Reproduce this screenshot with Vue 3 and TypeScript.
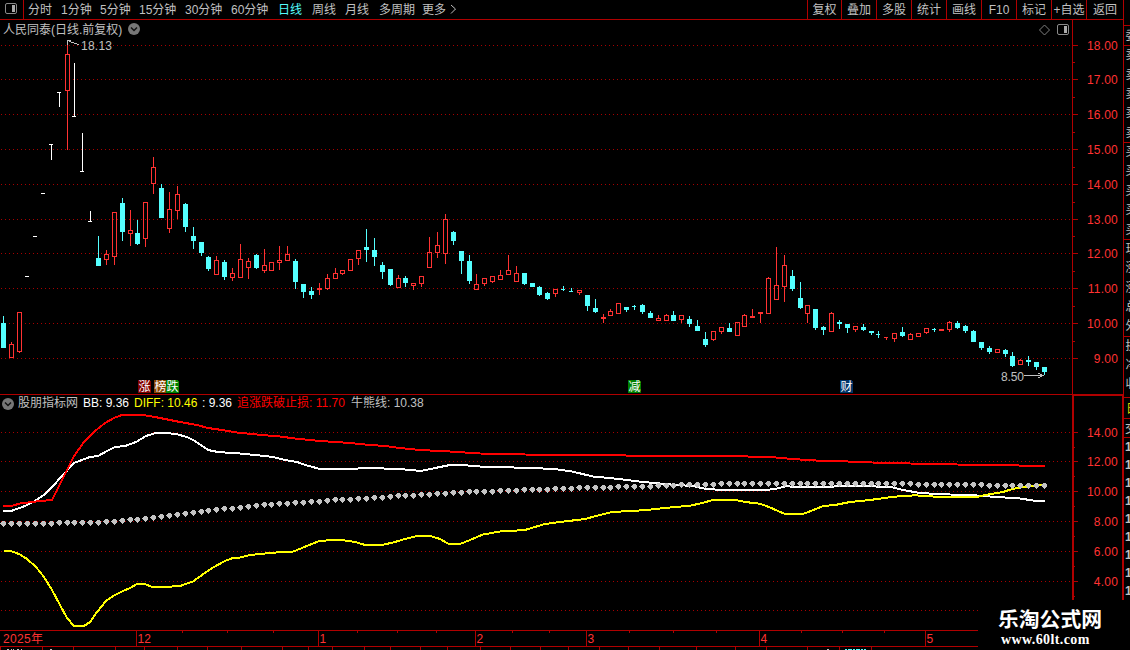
<script setup lang="ts">
type Kind = 'r' | 'c'
// x centre, high, body top, body bottom, low
type Bar = [Kind, number, number, number, number, number]

const bars: Bar[] = [
  ['c', 3, 316, 323, 348, 348], ['r', 11, 342, 344, 358, 358], ['r', 19, 312, 312, 352, 353],
  ['r', 67, 40, 54, 91, 150],
  ['c', 98, 236, 258, 266, 266], ['r', 106, 250, 254, 260, 265], ['r', 114, 212, 212, 257, 265],
  ['c', 122, 198, 203, 232, 241], ['r', 130, 210, 230, 234, 246], ['c', 137, 220, 233, 244, 245],
  ['r', 145, 202, 202, 239, 247], ['r', 153, 157, 167, 184, 194], ['c', 161, 184, 188, 218, 218],
  ['r', 169, 192, 209, 229, 233], ['r', 177, 186, 194, 211, 219], ['c', 185, 203, 204, 227, 232],
  ['c', 193, 227, 236, 241, 249], ['c', 201, 242, 242, 253, 256], ['c', 208, 256, 257, 269, 271],
  ['r', 216, 256, 260, 275, 275], ['c', 224, 260, 262, 277, 280], ['r', 232, 268, 273, 278, 281],
  ['r', 240, 244, 259, 278, 278], ['r', 248, 258, 261, 268, 279], ['c', 256, 254, 255, 268, 269],
  ['r', 264, 249, 265, 271, 273], ['r', 271, 262, 262, 271, 271], ['r', 279, 246, 260, 263, 270],
  ['r', 287, 246, 254, 261, 261], ['c', 295, 259, 261, 282, 289], ['c', 303, 284, 284, 292, 298],
  ['c', 311, 287, 291, 295, 299], ['r', 319, 283, 288, 290, 295], ['r', 327, 274, 278, 289, 290],
  ['r', 335, 268, 273, 279, 279], ['r', 342, 270, 270, 274, 275], ['r', 350, 259, 259, 271, 271],
  ['r', 358, 250, 250, 259, 265], ['c', 366, 229, 247, 250, 262], ['c', 374, 238, 250, 257, 266],
  ['c', 382, 262, 265, 272, 279], ['c', 390, 269, 269, 285, 286], ['r', 398, 275, 278, 288, 288],
  ['c', 405, 276, 278, 283, 287], ['r', 413, 283, 283, 286, 290], ['r', 421, 276, 276, 284, 287],
  ['r', 429, 237, 252, 268, 268], ['r', 437, 232, 245, 253, 258], ['r', 445, 214, 219, 254, 264],
  ['c', 453, 231, 232, 241, 245], ['c', 461, 251, 251, 261, 274], ['c', 469, 255, 261, 281, 284],
  ['r', 476, 274, 284, 290, 290], ['r', 484, 278, 278, 284, 286], ['r', 492, 276, 276, 282, 283],
  ['r', 500, 270, 275, 280, 280], ['r', 508, 255, 270, 275, 275], ['r', 516, 266, 273, 282, 282],
  ['c', 524, 273, 273, 284, 285], ['c', 532, 283, 283, 287, 287], ['c', 539, 286, 287, 295, 296],
  ['c', 547, 292, 293, 299, 300], ['r', 555, 289, 289, 294, 297], ['c', 563, 286, 289, 290, 291],
  ['c', 571, 288, 291, 292, 292], ['r', 579, 290, 290, 293, 295], ['c', 587, 295, 295, 306, 311],
  ['c', 595, 299, 308, 312, 313], ['r', 603, 314, 317, 319, 323], ['r', 610, 309, 311, 316, 316],
  ['r', 618, 303, 303, 314, 314], ['c', 626, 307, 307, 310, 312], ['c', 634, 305, 306, 307, 310],
  ['c', 642, 304, 305, 312, 314], ['c', 650, 311, 313, 318, 318], ['r', 658, 315, 318, 321, 321],
  ['r', 666, 314, 315, 321, 321], ['c', 673, 311, 315, 321, 321], ['r', 681, 315, 315, 320, 323],
  ['c', 689, 316, 319, 324, 327], ['c', 697, 320, 326, 331, 331], ['c', 705, 332, 339, 345, 347],
  ['r', 713, 331, 331, 340, 341], ['r', 721, 327, 327, 332, 334], ['c', 729, 323, 328, 332, 332],
  ['r', 737, 322, 322, 336, 336], ['r', 744, 314, 315, 327, 327], ['r', 752, 309, 316, 318, 318],
  ['r', 760, 312, 312, 314, 323], ['r', 768, 277, 278, 314, 314], ['r', 776, 247, 285, 300, 300],
  ['r', 784, 255, 265, 287, 302], ['c', 792, 270, 276, 289, 291], ['c', 800, 282, 298, 308, 309],
  ['r', 807, 305, 305, 314, 323], ['c', 815, 309, 309, 328, 330], ['c', 823, 326, 327, 330, 335],
  ['r', 831, 312, 313, 332, 332], ['c', 839, 320, 322, 324, 329], ['c', 847, 324, 324, 328, 333],
  ['r', 855, 326, 326, 330, 332], ['c', 863, 324, 327, 330, 331], ['c', 871, 331, 331, 333, 335],
  ['c', 878, 331, 334, 335, 338], ['r', 886, 337, 337, 338, 340], ['r', 894, 333, 333, 339, 342],
  ['c', 902, 327, 332, 336, 337], ['r', 910, 333, 334, 340, 340], ['r', 918, 333, 333, 337, 337],
  ['r', 926, 328, 328, 333, 334], ['c', 934, 328, 329, 330, 332], ['r', 941, 329, 329, 331, 331],
  ['r', 949, 321, 322, 330, 332], ['c', 957, 321, 323, 328, 329], ['c', 965, 325, 326, 331, 333],
  ['c', 973, 330, 331, 342, 342], ['c', 981, 342, 342, 348, 350], ['c', 989, 346, 348, 352, 354],
  ['r', 997, 349, 349, 353, 353], ['c', 1005, 349, 350, 354, 357], ['c', 1012, 352, 356, 366, 367],
  ['r', 1020, 359, 360, 365, 365], ['c', 1028, 356, 360, 362, 366], ['c', 1036, 362, 362, 367, 370],
  ['c', 1044, 367, 367, 372, 375],
]

// Limit-price sessions: bar x, bar y, stem top, stem bottom
const limits: number[][] = [
  [27, 276, 276, 277], [35, 236, 236, 237], [43, 193, 193, 194],
  [51, 144, 144, 160], [59, 92, 92, 107], [74, 116, 63, 117], [82, 171, 133, 172], [90, 221, 211, 222],
]

function rect(x0: number, y0: number, x1: number, y1: number): string {
  return `M${x0} ${y0}H${x1}V${y1}H${x0}Z`
}

let redPath = ''
let cyanPath = ''
for (const [k, x, h, t, b, l] of bars) {
  const thin = b - t === 1
  let d = ''
  if (t > h) d += rect(x, h, x + 1, t)
  if (l > b) d += rect(x, b, x + 1, l)
  d += rect(x - 2, t, thin ? x + 2 : x + 3, b)
  if (k === 'r') {
    if (b - t > 2) d += rect(x - 1, t + 1, x + 2, b - 1)
    redPath += d
  } else cyanPath += d
}
const limitPath = limits
  .map(([x, y, t, b]) => rect(x - 2, y, x + 2, y + 1) + (b - t > 1 ? rect(x, t, x + 1, b) : ''))
  .join('')

interface Level { y: number; label: string }
const priceLevels: Level[] = [45, 79, 114, 149, 184, 219, 253, 288, 323, 358].map((y, i) => ({
  y, label: (18 - i).toFixed(2),
}))
const priceMinor = [62, 97, 132, 167, 202, 236, 271, 306, 341]
const indLevels: Level[] = [432, 461, 491, 521, 551, 581].map((y, i) => ({ y, label: (14 - 2 * i).toFixed(2) }))
const indGrid = [432, 461, 491, 521, 551, 581, 610]
const indMinor = [447, 476, 506, 536, 566, 596]

const stopLine = '3,506 11,506 20,503.5 40,501 52,500 58,488 74,456 84,442 95,431 105,423 114,418 122,415 134,414.6 145,415.3 155,417 165,419 180,422 197,425 208,428 222,430 237,432.5 262,435 280,436.5 295,438.5 320,441 350,443 370,445 385,446 400,448 415,449.5 430,450.5 450,451.5 480,453.5 525,454.5 560,455 626,455.5 630,456 744,456 752,457 776,457.5 792,459 808,460 823,461 848,461.5 872,462.5 910,463.5 957,464.5 1012,465.3 1045,466.2'
const bbLine = '3,511 11,511 25,506 35,501 45,494 52,487 62,476 74,463 82,460 90,457 98,456 107,451 115,447 125,446 136,442 146,436 155,433.3 167,433 178,434.5 187,437 195,441 208,450 218,452 240,453.5 260,455.5 273,457 285,460 297,462 307,465.5 320,469 350,469 367,468 400,469 421,471 435,468 450,465 462,465 480,466.5 530,468 555,469 572,471.5 593,476.5 610,478 627,480 643,482 673,484.7 693,486 706,489 723,490 767,490 777,488.5 787,486 793,487 830,487 838,486 873,486.3 893,487.5 903,490 920,493 937,494 977,495.5 997,497 1020,498.5 1033,500.5 1045,501.3'
const diffLine = '4,551 11,551 20,554.5 27,559 36,567 44,577 52,590 60,605 67,618 74,626 84,626 90,622 97,612 106,601 113,596 122,591.5 130,588 136,584.5 145,584 152,587 165,587 180,586 193,581.5 202,575 213,567.5 225,561 233,558 240,557.5 250,555 270,553 280,552.2 292,552 302,548 318,541.5 330,540 345,540.5 355,542 365,545 382,545 395,542 405,539 415,536.5 430,536 440,539 448,543.5 460,544 470,540 483,534.5 500,531.5 525,530 545,524 560,522 585,519 600,515 612,512 643,510.3 665,508 690,505.7 700,503.5 712,500.3 737,500.3 745,502 760,503.7 770,507.5 785,514 803,514 812,510.5 823,506 835,505 850,502 870,500 893,496.8 915,495.3 940,497 977,497 985,495 1003,492 1013,488.8 1023,487 1030,486 1044,485'

const bullBear: number[][] = [
  [3, 523], [52, 523], [60, 522], [98, 521.5], [114, 520.6], [130, 519.4], [145, 518], [161, 516], [185, 513],
  [208, 510], [232, 507.5], [256, 505], [280, 503], [303, 501.5], [327, 500], [350, 498.5], [382, 496.5],
  [413, 494.5], [445, 493], [476, 491], [508, 490], [563, 488], [590, 487], [640, 486], [660, 485],
  [690, 484], [740, 483], [910, 483], [918, 484], [980, 484], [990, 485], [1044, 485],
]
function sample(x: number): number {
  for (let i = 1; i < bullBear.length; i++) {
    const [x0, y0] = bullBear[i - 1]
    const [x1, y1] = bullBear[i]
    if (x <= x1) return Math.round(y0 + ((y1 - y0) * (x - x0)) / (x1 - x0))
  }
  return 485
}
const dotXs = [...bars.map((b) => b[1]), ...limits.map((l) => l[0])].sort((a, b) => a - b)
const dots = dotXs.map((x) => ({ x, y: sample(x) }))

const periods = ['分时', '1分钟', '5分钟', '15分钟', '30分钟', '60分钟', '日线', '周线', '月线', '多周期', '更多']
const tools = ['复权', '叠加', '多股', '统计', '画线', 'F10', '标记', '+自选', '返回']
const tags = [
  { x: 138, text: '涨', fill: '#800000' }, { x: 154, text: '榜', fill: '#884400' },
  { x: 166, text: '跌', fill: '#008000' }, { x: 628, text: '减', fill: '#008000' },
  { x: 840, text: '财', fill: '#003468' },
]
const months = [
  { x: 136, label: '12' }, { x: 318, label: '1' }, { x: 475, label: '2' },
  { x: 586, label: '3' }, { x: 759, label: '4' }, { x: 925, label: '5' },
]
const weekTicks = [182, 227, 273, 357, 397, 436, 512, 549, 629, 673, 716, 801, 842, 884]
const lowerTicks = [0, 42, 73, 115, 144, 177, 207, 241, 282, 308, 332, 364, 390, 420, 447, 480, 510, 540, 568, 599, 628, 659, 696, 735, 766, 807, 839, 871]
const sideLines = [25, 45, 142, 239, 336, 397, 418, 437]
const sideRows = ['委', '卖', '卖', '卖', '卖', '卖', '买', '买', '买', '买', '买', '现', '涨', '涨', '总', '外', '换', '净', '收']
  .map((t, i) => ({ t, y: 40 + i * 19.35 }))
const trades = [447, 465, 483, 501, 519, 537, 555, 573, 591]
</script>

<template>
  <div class="terminal">
    <header class="toolbar">
      <div class="layout-btn">
        <svg width="12" height="12" viewBox="0 0 12 12">
          <rect x="0.5" y="0.5" width="11" height="10" rx="1.5" fill="none" stroke="#8a8a8a" />
          <rect x="7" y="2" width="3" height="7" fill="#aaa" />
        </svg>
      </div>
      <nav class="periods">
        <span v-for="p in periods" :key="p" :class="{ active: p === '日线' }">{{ p }}</span>
        <svg width="8" height="11" viewBox="0 0 8 11"><path d="M1 1L5.5 5L1 9.5" fill="none" stroke="#c0c0c0" /></svg>
      </nav>
      <div class="tools">
        <span v-for="t in tools" :key="t">{{ t }}</span>
      </div>
    </header>

    <div class="body">
      <main class="charts">
        <div class="title-row">
          <span class="stock">人民同泰(日线.前复权)</span>
          <svg class="drop" width="12" height="12" viewBox="0 0 12 12">
            <circle cx="6" cy="6" r="6" fill="#777" />
            <path d="M3 4.5L6 7.5L9 4.5" fill="none" stroke="#111" stroke-width="1.5" />
          </svg>
          <svg class="panel-icons" width="30" height="12" viewBox="0 0 30 12">
            <path d="M5.5 1L10.5 6L5.5 11L0.5 6Z" fill="none" stroke="#808080" />
            <rect x="18.5" y="0.5" width="11" height="10" rx="1.5" fill="none" stroke="#8a8a8a" />
            <rect x="25" y="2" width="3" height="7" fill="#aaa" />
          </svg>
        </div>

        <svg class="pane" width="1123" height="354" viewBox="0 40 1123 354" shape-rendering="crispEdges">
          <line v-for="l in priceLevels" :key="l.y" class="grid" x1="1" x2="1071" :y1="l.y + 0.5" :y2="l.y + 0.5" />
          <path class="red" fill-rule="evenodd" :d="redPath" />
          <path class="cyan" :d="cyanPath" />
          <path class="white" :d="limitPath" />
          <rect class="rule" x="1072" y="40" width="1" height="354" />
          <rect v-for="l in priceLevels" :key="'t' + l.y" class="rule" x="1072" :y="l.y" width="6" height="1" />
          <rect v-for="y in priceMinor" :key="'m' + y" class="rule" x="1072" :y="y" width="3" height="1" />
          <text v-for="l in priceLevels" :key="'l' + l.y" class="axis" x="1118" :y="l.y + 5">{{ l.label }}</text>
          <path class="pointer" d="M67.5 45V40.5H71M68 40.5L72 42.5L79 44.5" />
          <text class="note" x="81" y="50" textLength="31">18.13</text>
          <text class="note" x="1001" y="381" textLength="23">8.50</text>
          <path class="pointer" d="M1024 375.5H1043M1038 373L1043 375.5L1038 378" />
          <g v-for="t in tags" :key="t.x">
            <path :fill="t.fill" :d="`M${t.x} 380h11l2 2v11h-13z`" />
            <text class="tag" :x="t.x + 0.5" y="391">{{ t.text }}</text>
          </g>
        </svg>

        <section class="indicator">
          <div class="ind-head">
            <div class="ind-values">
              <svg class="drop" width="12" height="12" viewBox="0 0 12 12">
                <circle cx="6" cy="6" r="6" fill="#777" />
                <path d="M3 4.5L6 7.5L9 4.5" fill="none" stroke="#111" stroke-width="1.5" />
              </svg>
              <span>股朋指标网</span>
              <span class="v-white">BB: 9.36</span>
              <span class="v-yellow">DIFF: 10.46</span>
              <span class="v-white">: 9.36</span>
              <span class="v-red">追涨跌破止损: 11.70</span>
              <span>牛熊线: 10.38</span>
            </div>
            <div class="ind-corner"></div>
          </div>
          <svg class="pane" width="1123" height="218" viewBox="0 412 1123 218" shape-rendering="crispEdges">
            <line v-for="y in indGrid" :key="y" class="grid" x1="1" x2="1071" :y1="y + 0.5" :y2="y + 0.5" />
            <polyline class="curve" stroke="#fff" :points="bbLine" />
            <polyline class="curve" stroke="#ff0" :points="diffLine" />
            <path
              v-for="d in dots" :key="d.x" fill="#c4c4c4"
              :d="`M${d.x - 1} ${d.y - 2}h3v1h1v3h-1v1h-1v1h-1v-1h-1v-1h-1v-1h-1v-1h1v-1h1z`"
            />
            <polyline class="curve" stroke="#f00" :points="stopLine" />
            <rect class="rule" x="1072" y="412" width="2" height="188" />
            <rect class="rule" x="1122" y="412" width="1" height="188" />
            <rect v-for="l in indLevels" :key="'t' + l.y" class="rule" x="1072" :y="l.y" width="6" height="1" />
            <rect v-for="y in indMinor" :key="'m' + y" class="rule" x="1072" :y="y" width="3" height="1" />
            <text v-for="l in indLevels" :key="'l' + l.y" class="axis" x="1118" :y="l.y + 5">{{ l.label }}</text>
          </svg>
        </section>

        <svg class="pane" width="1123" height="20" viewBox="0 630 1123 20" shape-rendering="crispEdges">
          <rect class="rule" x="0" y="630" width="978" height="1" />
          <rect class="rule" x="0" y="646" width="978" height="1" />
          <rect v-for="x in weekTicks" :key="x" class="rule" :x="x" y="631" width="1" height="2" />
          <rect v-for="x in lowerTicks" :key="'b' + x" class="rule" :x="x" y="647" width="1" height="3" />
          <path stroke="#c0c0c0" stroke-dasharray="2 2 1 1 1 3" d="M7 649.5H22M50 649.5H52M827 649.5H830" />
          <path stroke="#54ffff" stroke-dasharray="2 1 4 1" d="M845 649.5H866" />
          <text class="date" x="3" y="643" textLength="40">2025年</text>
          <g v-for="m in months" :key="m.x">
            <rect class="rule" :x="m.x" y="630" width="1" height="17" />
            <text class="date" :x="m.x + 1.5" y="643">{{ m.label }}</text>
          </g>
        </svg>
      </main>

      <aside class="side">
        <svg width="6" height="630" viewBox="1124 20 6 630" shape-rendering="crispEdges">
          <text v-for="r in sideRows" :key="'r' + r.y" class="quote" x="1125.5" :y="r.y">{{ r.t }}</text>
          <text class="quote hot" x="1126" y="413">日</text>
          <text class="quote" x="1125" y="433">交</text>
          <text v-for="y in trades" :key="'x' + y" class="quote deal" x="1125" :y="y + 4">1</text>
          <rect v-for="y in sideLines" :key="y" class="rule" x="1124" :y="y" width="6" height="1" />
        </svg>
      </aside>
    </div>

    <div class="brand">
      <strong>乐淘公式网</strong>
      <b>www.60lt.com</b>
    </div>
  </div>
</template>

<style>
body {
  background: #000;
}
</style>

<style scoped>
.terminal {
  position: relative;
  width: 1130px;
  height: 650px;
  overflow: hidden;
  background: #000;
  color: #c0c0c0;
  font: 12px/19px 'Liberation Sans', 'Noto Sans CJK SC', sans-serif;
  white-space: nowrap;
}
.toolbar {
  display: flex;
  box-sizing: border-box;
  width: 1124px;
  height: 20px;
  border-right: 1px solid #b00000;
  border-bottom: 1px solid #b00000;
  line-height: 20px;
}
.layout-btn {
  box-sizing: border-box;
  width: 24px;
  padding: 3px 0 0 5px;
  border-right: 1px solid #b00000;
  line-height: 0;
}
.periods {
  display: grid;
  grid-template-columns: 33px 39px 39px 46px 46px 47px 34px 33px 34px 43px 28px 10px;
  flex: 1;
  padding-left: 4px;
}
.periods svg {
  margin-top: 4px;
}
.active {
  color: #54fcfc;
}
.tools {
  display: grid;
  grid-template-columns: 34px repeat(7, 35px) 37px;
}
.tools span {
  height: 19px;
  border-left: 1px solid #b00000;
  text-align: center;
}
.body {
  display: flex;
}
.charts {
  display: flex;
  flex-direction: column;
  width: 1123px;
}
.title-row {
  display: flex;
  align-items: center;
  box-sizing: border-box;
  width: 1073px;
  height: 20px;
  padding-left: 3px;
  border-right: 1px solid #b00000;
}
.stock {
  width: 125px;
}
.title-row .drop {
  margin-top: -2px;
}
.panel-icons {
  margin: 0 3px 0 auto;
}
.pane {
  display: block;
  flex: none;
}
.ind-head {
  display: flex;
  box-sizing: border-box;
  height: 18px;
  border-top: 1px solid #b00000;
}
.ind-values {
  display: grid;
  grid-template-columns: 16px 65px 51px 68px 35px 114px 80px;
  align-items: center;
  box-sizing: border-box;
  width: 1074px;
  height: 17px;
  padding-left: 2px;
  border-right: 2px solid #b00000;
  line-height: 17px;
}
.ind-corner {
  box-sizing: border-box;
  flex: 1;
  border-top: 1px solid #b00000;
  border-right: 1px solid #b00000;
}
.v-white {
  color: #fff;
}
.v-yellow {
  color: #ff0;
}
.v-red {
  color: #f00;
}
.side {
  width: 6px;
  border-left: 1px solid #b00000;
}
.side svg {
  display: block;
}
.rule {
  fill: #b00000;
}
.grid {
  stroke: #a80000;
  stroke-dasharray: 1 3;
}
.red {
  fill: #ff3232;
}
.cyan {
  fill: #54ffff;
}
.white {
  fill: #fff;
}
.curve {
  fill: none;
  stroke-width: 2;
}
.axis {
  fill: #ff3232;
  letter-spacing: 0.2px;
  text-anchor: end;
}
.date {
  fill: #ff3232;
}
.note,
.quote {
  fill: #c0c0c0;
}
.deal {
  font-weight: bold;
}
.hot {
  fill: #d8d800;
}
.pointer {
  fill: none;
  stroke: #c0c0c0;
}
.tag {
  fill: #fff;
}
.brand {
  position: absolute;
  left: 978px;
  top: 600px;
  display: flex;
  flex-direction: column;
  box-sizing: border-box;
  width: 152px;
  height: 50px;
  padding: 7px 0 0 20px;
  background: #000;
  color: #fff;
}
.brand strong {
  font: bold 20.8px/22px 'Noto Sans CJK SC', sans-serif;
}
.brand b {
  margin-top: 2px;
  padding-left: 3px;
  font: bold 14px/17px 'Liberation Serif', serif;
  letter-spacing: 0.4px;
}
</style>
